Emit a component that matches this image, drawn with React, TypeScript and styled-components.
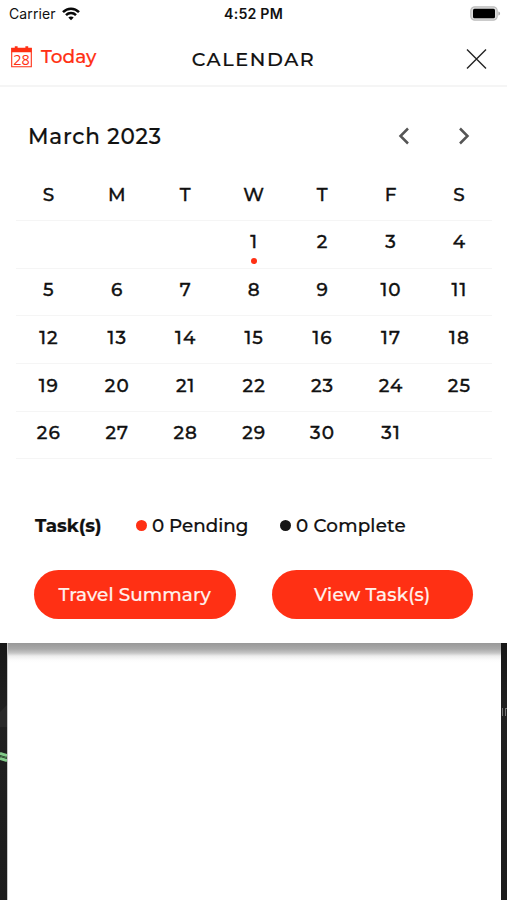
import React from "react";
import styled, { createGlobalStyle } from "styled-components";

const red = "#ff3014";

const GlobalStyle = createGlobalStyle`
  * { box-sizing: border-box; }
  body { margin: 0; background: #fff; }
  button { border: 0; padding: 0; margin: 0; background: none; font: inherit; color: inherit; }
`;

const Screen = styled.div`
  width: 507px;
  height: 900px;
  overflow: hidden;
  display: flex;
  flex-direction: column;
  background: #fff;
  color: #111;
  font-family: Montserrat, Inter, sans-serif;
  font-weight: 500;
`;

const Panel = styled.main`
  height: 643px;
  flex: none;
  display: flex;
  flex-direction: column;
  background: #fff;
  -webkit-text-stroke: 0.2px currentColor;
`;

const Label = styled.span<{ $size: number; $spacing?: number; $weight?: number }>`
  font-size: ${(p) => p.$size}px;
  letter-spacing: ${(p) => p.$spacing ?? 0}px;
  font-weight: ${(p) => p.$weight ?? 500};
  line-height: 24px;
  white-space: nowrap;
`;

const StatusBar = styled.div`
  height: 28px;
  padding: 0 6px 1px 9px;
  display: grid;
  grid-template-columns: 1fr auto 1fr;
  align-items: center;
  font-family: Inter, sans-serif;
  -webkit-text-stroke: 0;
`;

const Clock = styled.time`
  padding-right: 3px;
  display: flex;
`;

const Carrier = styled.div`
  display: flex;
  align-items: center;
  gap: 6px;
`;

const BatterySlot = styled.div`
  display: flex;
  justify-content: flex-end;
`;

const Header = styled.header`
  height: 59px;
  padding: 1px 19px 0 11px;
  display: grid;
  grid-template-columns: 1fr auto 1fr;
  align-items: center;
  border-bottom: 2px solid #f5f5f5;
`;

const TodayButton = styled.button`
  display: flex;
  align-items: center;
  gap: 9px;
  color: ${red};
  padding-bottom: 1px;
`;

const Title = styled.h1`
  margin: 0;
  padding: 4px 0 0 8px;
  font-size: 19.2px;
  line-height: 24px;
  font-weight: 500;
  letter-spacing: 1.6px;
`;

const CloseButton = styled.button`
  justify-self: end;
  display: flex;
  padding-top: 4px;
`;

const MonthBar = styled.div`
  height: 82px;
  padding: 16px 36.5px 0 28px;
  display: flex;
  align-items: center;
  justify-content: space-between;
`;

const Arrows = styled.div`
  display: flex;
  gap: 46px;
`;

const ArrowButton = styled.button`
  display: flex;
`;

const Calendar = styled.div`
  margin: 0 14px;
  display: flex;
  flex-direction: column;
`;

const Week = styled.div<{ $head?: boolean }>`
  height: ${(p) => (p.$head ? 52.4 : 47.7)}px;
  padding-top: ${(p) => (p.$head ? 13.5 : 9.1)}px;
  display: grid;
  grid-template-columns: repeat(7, 1fr);
  background: linear-gradient(#f5f5f5, #f5f5f5) center bottom / calc(100% - 3px) 1.4px no-repeat;
`;

const Day = styled.div`
  display: flex;
  flex-direction: column;
  align-items: center;
  font-size: 18.4px;
  -webkit-text-stroke: 0.35px currentColor;
  line-height: 24px;
  letter-spacing: 1.1px;
  padding-left: 1.4px;
`;

const Dot = styled.i<{ $size: number; $color: string }>`
  width: ${(p) => p.$size}px;
  height: ${(p) => p.$size}px;
  flex: none;
  border-radius: 50%;
  background: ${(p) => p.$color};
`;

const TaskDot = styled(Dot)`
  margin-top: 4px;
`;

const Tasks = styled.section`
  margin-top: 54px;
  padding-left: 35px;
  display: grid;
  grid-template-columns: 101px 144px auto;
  align-items: center;
`;

const Count = styled.div`
  display: flex;
  align-items: center;
  gap: 5px;
`;

const CountDot = styled(Dot)`
  margin-bottom: 1px;
`;

const Actions = styled.div`
  margin-top: 32px;
  padding: 0 34px;
  display: flex;
  justify-content: space-between;
`;

const Pill = styled.button`
  width: 201.5px;
  height: 49px;
  padding-top: 1px;
  border-radius: 25px;
  background: ${red};
  color: #fff1ec;
`;

const Backdrop = styled.section`
  flex: 1;
  display: grid;
  grid-template-columns: 7px 1fr 6px;
  background: #1c1c1c;
`;

const MapStrip = styled.div`
  overflow: hidden;
  background: linear-gradient(#171717, #202020 26%, #1c1c1c);
`;

const Sheet = styled.div`
  border-left: 1px solid #c8c8c8;
  background: linear-gradient(#989898 0, #a9a9a9 6px, #c6c6c6 10px, #ededed 13px, #fcfcfc 17px, #fff 20px);
`;

const CalendarIcon = () => (
  <svg width="21" height="22" viewBox="0 0 21 22" fill="none">
    <path d="M.7 2.2h19.6v18.6H.7z" stroke={red} strokeWidth="1.1" />
    <path d="M.5 2h20v4.2H.5zM3.8.3h2.8v3H3.8zM14.4.3h2.8v3h-2.8z" fill={red} />
    <text x="10.5" y="18.7" textAnchor="middle" fontFamily="Open Sans, sans-serif" fontSize="14.5" fontWeight="400" textLength="16.5" lengthAdjust="spacingAndGlyphs" fill={red}>28</text>
  </svg>
);

const WifiIcon = () => (
  <svg width="18" height="14" viewBox="0 0 18 14" fill="none" stroke="#080808" strokeWidth="2.5">
    <path d="M1 5.1C5.5.5 12.5.5 17 5.1M4 8.2c2.8-2.8 7.2-2.8 10 0" />
    <path d="M9 13.3 6.3 10.6c1.5-1.4 3.9-1.4 5.4 0z" fill="#080808" stroke="none" />
  </svg>
);

const BatteryIcon = () => (
  <svg width="31" height="15" viewBox="0 0 31 15">
    <rect x=".8" y=".8" width="26.4" height="13.4" rx="4" fill="#ddd" stroke="#bdbdbd" strokeWidth="1.2" />
    <rect x="3" y="2.8" width="22" height="9.4" rx="1.5" fill="#000" />
    <path d="M28.4 5.5c2.2.6 2.2 3.4 0 4z" fill="#aaa" />
  </svg>
);

const CloseIcon = () => (
  <svg width="23" height="22" viewBox="0 0 23 22" fill="none" stroke="#222" strokeWidth="1.35">
    <path d="m2 1.5 19 19m0-19-19 19" />
  </svg>
);

const Chevron = ({ next = false }: { next?: boolean }) => (
  <svg width="14" height="18" viewBox="0 0 14 18" fill="none" stroke="#555" strokeWidth="2.5">
    <path d={next ? "m3 1.5 7.5 7.5L3 16.5" : "M11 1.5 3.5 9l7.5 7.5"} />
  </svg>
);

const RoadLine = () => (
  <svg width="7" height="257" viewBox="0 0 7 257" fill="none">
    <path d="M0 69 7 62v22H0z" fill="#292929" />
    <path d="M0 110.5 7 112.5M0 115.5l7 2" stroke="#83cc8a" strokeWidth="3" />
    <path d="m0 113 7 2" stroke="#477e4c" />
  </svg>
);

const RoadMark = () => (
  <svg width="6" height="257" viewBox="0 0 6 257" stroke="#777">
    <path d="M1.5 65v8M4.5 65v8M4.5 65.5H6" />
  </svg>
);

const weekdays = ["S", "M", "T", "W", "T", "F", "S"];
const weeks = Array.from({ length: 5 }, (_, w) =>
  Array.from({ length: 7 }, (_, d) => w * 7 + d - 2)
);

export default function App() {
  return (
    <Screen>
      <GlobalStyle />
      <Panel>
        <StatusBar>
          <Carrier>
            <Label $size={14} $weight={400} $spacing={0.1}>Carrier</Label>
            <WifiIcon />
          </Carrier>
          <Clock><Label $size={14.2} $weight={600} $spacing={0.2}>4:52 PM</Label></Clock>
          <BatterySlot><BatteryIcon /></BatterySlot>
        </StatusBar>
        <Header>
          <TodayButton>
            <CalendarIcon />
            <Label $size={18.5}>Today</Label>
          </TodayButton>
          <Title>CALENDAR</Title>
          <CloseButton aria-label="Close"><CloseIcon /></CloseButton>
        </Header>
        <MonthBar>
          <Label $size={21.5} $spacing={0.8}>March 2023</Label>
          <Arrows>
            <ArrowButton aria-label="Previous month"><Chevron /></ArrowButton>
            <ArrowButton aria-label="Next month"><Chevron next /></ArrowButton>
          </Arrows>
        </MonthBar>
        <Calendar>
          <Week $head>
            {weekdays.map((name, i) => <Day key={i}>{name}</Day>)}
          </Week>
          {weeks.map((days, w) => (
            <Week key={w}>
              {days.map((day) => (
                <Day key={day}>
                  {day > 0 && day <= 31 ? day : ""}
                  {day === 1 && <TaskDot $size={6} $color={red} />}
                </Day>
              ))}
            </Week>
          ))}
        </Calendar>
        <Tasks>
          <Label $size={18.3} $weight={700}>Task(s)</Label>
          <Count>
            <CountDot $size={11} $color={red} />
            <Label $size={18.3}>0 Pending</Label>
          </Count>
          <Count>
            <CountDot $size={11} $color="#151515" />
            <Label $size={18.3} $spacing={0.2}>0 Complete</Label>
          </Count>
        </Tasks>
        <Actions>
          <Pill><Label $size={18.4} $spacing={0.1}>Travel Summary</Label></Pill>
          <Pill><Label $size={18.4} $spacing={0.2}>View Task(s)</Label></Pill>
        </Actions>
      </Panel>
      <Backdrop>
        <MapStrip><RoadLine /></MapStrip>
        <Sheet />
        <MapStrip><RoadMark /></MapStrip>
      </Backdrop>
    </Screen>
  );
}
